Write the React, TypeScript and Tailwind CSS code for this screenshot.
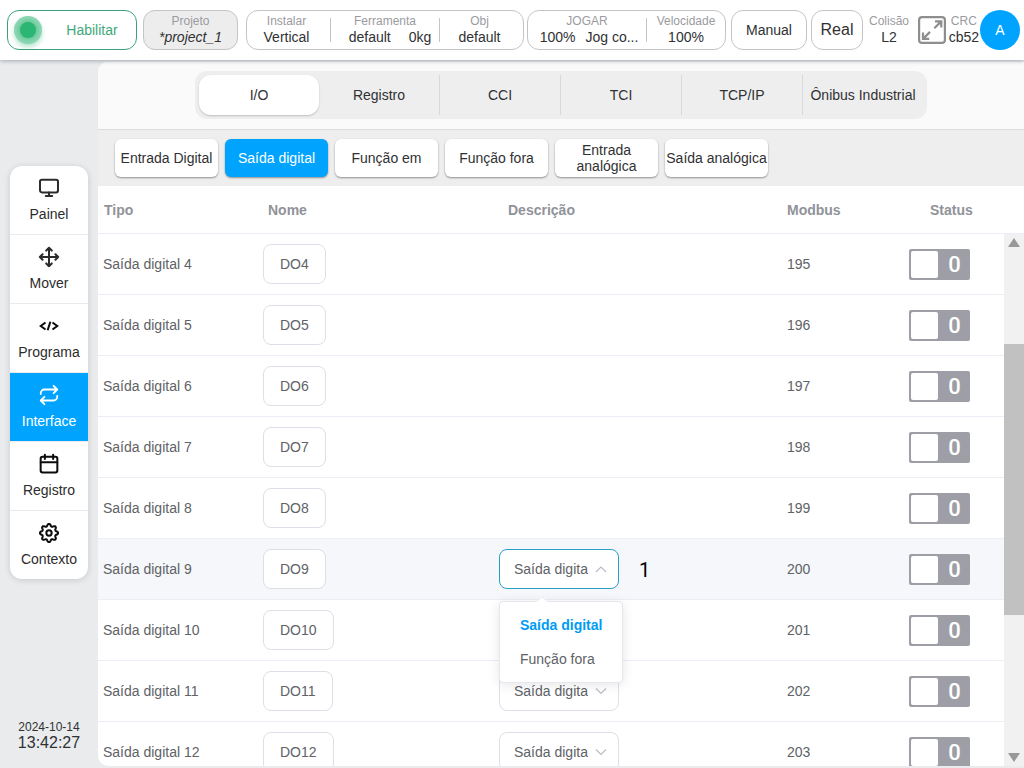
import type { ReactNode } from "react";
import clsx from "clsx";

function Stat({ label, value }: { label: string; value: ReactNode }) {
  return (
    <div className="flex flex-col items-center pb-0.5 whitespace-nowrap">
      <span className="text-[12px] leading-[15px] text-[#9b9b9f]">{label}</span>
      <span className="text-[14px] leading-[16px]">{value}</span>
    </div>
  );
}

function Divider() {
  return <span className="h-6 w-px shrink-0 bg-[#c4c4c8]" />;
}

function ExpandIcon() {
  return (
    <svg viewBox="0 0 28 28" className="size-7" fill="none" stroke="#8e8e8e" strokeWidth="2.2">
      <rect x="1.100" y="1.100" width="25.800" height="25.800" rx="3" />
      <path d="M17 5.300h6.300v6.300M23 5.600 16.300 12.300M11.300 22.900H5v-6.300M5.300 22.600 12 15.900" />
    </svg>
  );
}

function TopBar() {
  const box = "h-10 shrink-0 rounded-xl border border-[#c4c4c8] bg-white";
  return (
    <header className="relative z-20 flex h-[60px] shrink-0 items-center bg-white pr-1 pl-[7px] shadow-[0_1px_4px_rgba(0,21,41,0.3)]">
      <button className="flex h-10 w-[130px] shrink-0 items-center rounded-xl border border-[#3da27a] bg-white pl-1.5 text-[14px] text-[#3fa779]">
        <span className="flex size-7 items-center justify-center rounded-full bg-[#8fd7b5] shadow-[0_3px_5px_rgba(43,181,115,0.35)]">
          <span className="size-4 rounded-full bg-[#2bb673] shadow-[0_0_4px_2px_rgba(43,182,115,0.5)]" />
        </span>
        <span className="flex-1 pl-1.5 text-center">Habilitar</span>
      </button>
      <button className="ml-1.5 h-10 w-[95px] shrink-0 rounded-xl border border-[#c4c4c8] bg-[#ededed]">
        <Stat label="Projeto" value={<i>*project_1</i>} />
      </button>
      <div className={clsx(box, "ml-2 flex w-[278px] items-center")}>
        <button className="w-[83px] pr-1"><Stat label="Instalar" value="Vertical" /></button>
        <Divider />
        <button className="flex-1">
          <Stat label="Ferramenta" value={<span className="flex gap-[18px] pl-2.5"><span>default</span><span>0kg</span></span>} />
        </button>
        <Divider />
        <button className="w-[83px] pr-1"><Stat label="Obj" value="default" /></button>
      </div>
      <div className={clsx(box, "ml-[3px] flex w-[199px] items-center")}>
        <button className="flex-1">
          <Stat label="JOGAR" value={<span className="flex gap-2.5 pl-1"><span>100%</span><span>Jog co...</span></span>} />
        </button>
        <Divider />
        <button className="w-[78px]"><Stat label="Velocidade" value="100%" /></button>
      </div>
      <button className={clsx(box, "ml-[5px] w-[76px] text-[14px]")}>Manual</button>
      <button className={clsx(box, "ml-1 w-[52px] text-[16px]")}>Real</button>
      <div className="ml-1.5"><Stat label="Colisão" value="L2" /></div>
      <div className="ml-auto flex items-center">
        <button aria-label="Tela cheia" className="mr-[3px]"><ExpandIcon /></button>
        <Stat label="CRC" value="cb52" />
        <button className="ml-px size-10 rounded-full bg-[#00a4ff] text-[14px] text-white">A</button>
      </div>
    </header>
  );
}

const stroke = { fill: "none", stroke: "currentColor", strokeWidth: 2.2, strokeLinecap: "round", strokeLinejoin: "round" } as const;

// Eight rounded teeth around the centre of a 24-unit box.
const gearPath =
  Array.from({ length: 128 }, (_, i) => {
    const angle = (i / 128) * Math.PI * 2;
    const wave = Math.cos(angle * 8);
    const radius = 8.7 + 1.2 * Math.sign(wave) * Math.pow(Math.abs(wave), 0.7);
    return `${i === 0 ? "M" : "L"}${(12 + radius * Math.cos(angle)).toFixed(2)} ${(12 + radius * Math.sin(angle)).toFixed(2)}`;
  }).join("") + "Z";

const navItems: { label: string; icon: ReactNode }[] = [
  { label: "Painel", icon: <g {...stroke}><rect x="2.200" y="3" width="19.600" height="13.800" rx="2" /><path d="M8.500 20.800h7M12 17v3.800" /></g> },
  { label: "Mover", icon: <g {...stroke}><path d="M12 2v20M2 12h20M9 5l3-3 3 3M9 19l3 3 3-3M5 9l-3 3 3 3M19 9l3 3-3 3" /></g> },
  { label: "Programa", icon: <g {...stroke} stroke="#0c0c0c" strokeLinecap="butt" strokeLinejoin="miter"><path d="M8.200 8.200 3 12l5.200 3.800M15.800 8.200 21 12l-5.200 3.800M13.500 7.300l-3 9.400" /></g> },
  { label: "Interface", icon: <g {...stroke} strokeWidth="2"><path d="M17 2l4 4-4 4M3 11v-1a4 4 0 0 1 4-4h14M7 22l-4-4 4-4M21 13v1a4 4 0 0 1-4 4H3" /></g> },
  { label: "Registro", icon: <g {...stroke} stroke="#0c0c0c"><rect x="2.900" y="4.200" width="18.200" height="17" rx="2" /><path d="M3 10h18M7.500 1.900v4.600M16.500 1.900v4.600" /></g> },
  { label: "Contexto", icon: <g {...stroke} stroke="#0c0c0c"><path d={gearPath} /><circle cx="12" cy="12" r="2.900" /></g> },
];

function Sidebar() {
  return (
    <aside className="flex w-[98px] shrink-0 flex-col items-center justify-between pt-[106px] pb-4">
      <nav className="w-[78px] divide-y divide-[#e9ebed] overflow-hidden rounded-xl bg-white shadow-[0_1px_6px_rgba(0,0,0,0.15)]">
        {navItems.map((item) => (
          <a
            key={item.label}
            href="#"
            className={clsx(
              "flex h-[69px] flex-col items-center gap-[5px] pt-[11px] text-[14px] leading-5 last:h-[68px]",
              item.label === "Interface" ? "bg-[#00a4ff] text-white" : "text-[#2c2c2c]",
            )}
          >
            <svg viewBox="0 0 24 24" className="size-[22px]">{item.icon}</svg>
            {item.label}
          </a>
        ))}
      </nav>
      <div className="text-center">
        <div className="text-[12px] leading-[14px]">2024-10-14</div>
        <div className="text-[16px] leading-[18px]">13:42:27</div>
      </div>
    </aside>
  );
}

const sections = ["I/O", "Registro", "CCI", "TCI", "TCP/IP", "Ônibus Industrial"];
const kinds = ["Entrada Digital", "Saída digital", "Função em", "Função fora", "Entrada analógica", "Saída analógica"];
const rows = [4, 5, 6, 7, 8, 9, 10, 11, 12];

function Chevron({ up = false }: { up?: boolean }) {
  return (
    <svg viewBox="0 0 12 12" className="pointer-events-none absolute top-3.5 right-3 size-3" fill="none" stroke="#b9bdc5" strokeWidth="1.200">
      <path d={up ? "M1 9l5-5 5 5" : "M1 3.500l5 5 5-5"} />
    </svg>
  );
}

function KindSelect({ row, open = false }: { row: number; open?: boolean }) {
  return (
    <div className="relative w-[120px]">
      <select
        aria-label={`Descrição DO${row}`}
        className={clsx(
          "block h-10 w-full appearance-none rounded-lg border bg-white pt-0.5 pr-[30px] pl-3.5 text-[14px] text-[#606266]",
          open ? "border-[#2b9fcb]" : "border-[#dcdfe6]",
        )}
      >
        <option>Saída digital</option>
        <option>Função fora</option>
      </select>
      <Chevron up={open} />
      {open && (
        <ul role="listbox" className="absolute top-[52px] left-0 z-10 w-[124px] rounded border border-[#e4e7ed] bg-white py-1.5 shadow-[0_2px_12px_rgba(0,0,0,0.1)]">
          <svg viewBox="0 0 12 6" className="absolute -top-1.5 left-9 h-1.5 w-3">
            <path d="M0 6 6 1l6 5" fill="#fff" stroke="#ebeef5" />
          </svg>
          <li role="option" aria-selected="true" className="pl-5 text-[14px] leading-[34px] font-bold text-[#009cf5]">Saída digital</li>
          <li role="option" aria-selected="false" className="pl-5 text-[14px] leading-[34px]">Função fora</li>
        </ul>
      )}
    </div>
  );
}

function IoTable() {
  return (
    <table className="col-start-1 row-start-1 w-full table-fixed self-start text-left text-[14px] text-[#606266]">
      <colgroup>
        <col className="w-[165px]" />
        <col className="w-[236px]" />
        <col />
        <col className="w-[122px]" />
        <col className="w-[115px]" />
      </colgroup>
      <thead className="text-[#909399]">
        <tr className="h-[47px] border-b border-[#ebeef5] [&>th]:pt-[3px]">
          <th className="pl-1.5">Tipo</th>
          <th className="pl-[5px]">Nome</th>
          <th className="pl-[9px]">Descrição</th>
          <th>Modbus</th>
          <th className="pl-[21px]">Status</th>
        </tr>
      </thead>
      <tbody>
        {rows.map((n) => (
          <tr key={n} className={clsx("h-[61px] border-b border-[#ebeef5]", n === 9 && "bg-[#f5f7fa]")}>
            <td className="pt-0.5 pl-[5px]">Saída digital {n}</td>
            <td>
              <button className="h-10 rounded-lg border border-[#dcdfe6] bg-white px-4 pt-0.5">DO{n}</button>
            </td>
            <td>
              {n > 8 && n !== 10 && (
                <div className="flex items-center gap-5">
                  <KindSelect row={n} open={n === 9} />
                  {n === 9 && <span className="pt-0.5 font-['Roboto',sans-serif] text-[20px] leading-6 text-black">1</span>}
                </div>
              )}
            </td>
            <td className="pt-0.5">{191 + n}</td>
            <td className="pt-0.5">
              <button role="switch" aria-checked="false" aria-label={`Status DO${n}`} className="flex h-[31px] w-[61px] items-center rounded-xs bg-[#9e9ea7] p-0.5 text-white">
                <span className="size-[27px] rounded-xs bg-white" />
                <span className="flex-1 pl-[3px] text-center font-['Roboto',sans-serif] text-[22px] leading-none font-medium">0</span>
              </button>
            </td>
          </tr>
        ))}
      </tbody>
    </table>
  );
}

function Scrollbar() {
  return (
    <div className="z-10 col-start-1 row-start-1 mt-12 flex w-5 flex-col items-center justify-between justify-self-end bg-[#f1f1f1] py-1">
      <svg viewBox="0 0 12 9" className="h-[9px] w-3 shrink-0" fill="#999"><path d="M6 0l6 9H0z" /></svg>
      <div className="flex w-full flex-1 flex-col pt-[97px] pb-[138px]">
        <div className="flex-1 bg-[#c1c1c1]" />
      </div>
      <svg viewBox="0 0 12 9" className="h-[9px] w-3 shrink-0" fill="#999"><path d="M6 9l6-9H0z" /></svg>
    </div>
  );
}

export default function App() {
  return (
    <div className="flex h-screen flex-col overflow-hidden bg-[#e9ebed] font-['Liberation_Sans',Arial,sans-serif] text-[#303133]">
      <TopBar />
      <div className="flex min-h-0 flex-1">
        <Sidebar />
        <main className="mt-0.5 mb-0.5 flex min-w-0 flex-1 flex-col overflow-hidden rounded-l-[10px] bg-white">
          <div className="flex h-[68px] shrink-0 items-start justify-center border-b border-[#dcdcdc] bg-[#fafafa] pt-[9px]">
            <div role="tablist" className="flex h-12 rounded-xl bg-[#eeeeee] p-1 text-[14px]">
              {sections.map((name, i) => (
                <button
                  key={name}
                  role="tab"
                  aria-selected={i === 0}
                  className={clsx(
                    "whitespace-nowrap",
                    i === 0 && "rounded-xl bg-white shadow-[0_1px_2px_rgba(0,0,0,0.2)]",
                    i > 1 ? "w-[121px] border-l border-[#d8d8d8]" : "w-[120px]",
                  )}
                >
                  {name}
                </button>
              ))}
            </div>
          </div>
          <div className="flex h-14 shrink-0 gap-[7px] bg-[#eeeeee] pt-[9px] pl-[17px]">
            {kinds.map((name) => (
              <button
                key={name}
                className={clsx(
                  "h-[38px] w-[103px] rounded-md text-[14px] leading-4 shadow-[0_1px_2px_rgba(0,0,0,0.4)]",
                  name === "Saída digital" ? "bg-[#00a4ff] text-white" : "bg-white",
                )}
              >
                {name}
              </button>
            ))}
          </div>
          <div className="grid min-h-0 flex-1 grid-rows-[minmax(0,1fr)]">
            <IoTable />
            <Scrollbar />
          </div>
        </main>
      </div>
    </div>
  );
}
